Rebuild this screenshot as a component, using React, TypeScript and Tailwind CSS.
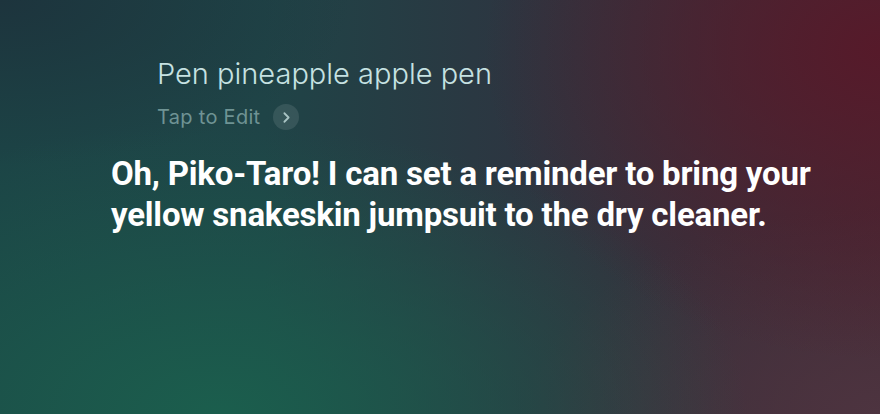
import { ChevronRight } from "lucide-react";

export default function App() {
  return (
    <div className="w-[880px] h-[414px] overflow-hidden bg-[radial-gradient(ellipse_60%_70%_at_25%_100%,#1b5e4d_0%,rgba(27,94,77,0)_100%),radial-gradient(ellipse_45%_75%_at_100%_12%,#561a2a_0%,rgba(86,26,42,0)_100%),radial-gradient(ellipse_40%_50%_at_100%_100%,#4d3440_0%,rgba(77,52,64,0)_100%),radial-gradient(ellipse_40%_40%_at_0%_0%,#1d343d_0%,rgba(29,52,61,0)_100%),linear-gradient(90deg,#1c4446_0%,#1f4447_30%,#2c3641_58%,#432a35_100%)] font-['Inter','Roboto',sans-serif]">
      <div className="pt-[54px] pl-[157px]">
        <p className="text-[29px] leading-[40px] font-light text-[#c6e2e2]">
          Pen pineapple apple pen
        </p>
        <div className="mt-[10px] flex items-center gap-[13px]">
          <span className="text-[20px] leading-[26px] font-normal text-[#6f9394] tracking-[0.3px]">
            Tap to Edit
          </span>
          <span className="w-[26px] h-[26px] rounded-full bg-white/10 flex items-center justify-center">
            <ChevronRight size={17} strokeWidth={2.5} className="text-[#a9c4c4]" />
          </span>
        </div>
      </div>
      <p className="mt-[23px] pl-[111px] pr-[20px] font-['Roboto',sans-serif] text-[33px] leading-[41px] font-bold text-white tracking-[-0.2px]">
        Oh, Piko-Taro! I can set a reminder to bring your
        <br />
        yellow snakeskin jumpsuit to the dry cleaner.
      </p>
    </div>
  );
}
